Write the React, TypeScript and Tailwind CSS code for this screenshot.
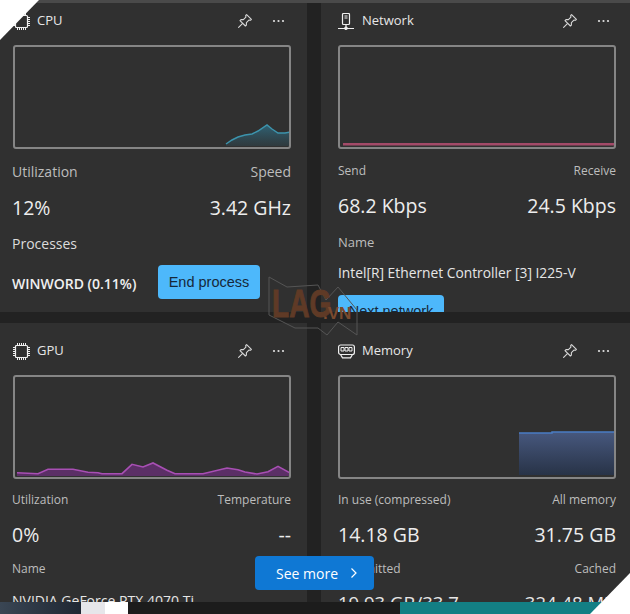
import React from "react";

const font = "font-['Open_Sans','Noto_Sans',sans-serif]";

const PinIcon = () => (
  <svg width="16" height="16" viewBox="0 0 16 16" fill="none" stroke="#d8d8d8" strokeWidth="1.1" strokeLinejoin="round" strokeLinecap="round">
    <path d="M9.6 1.6 14.4 6.4 13.5 7.3 11.9 7.1 9.4 9.6 9.4 12 8.4 13 3 7.6 4 6.6 6.4 6.6 8.9 4.1 8.7 2.5Z" />
    <path d="M5.4 10.6 1.6 14.4" />
  </svg>
);

const DotsIcon = () => (
  <svg width="13" height="4" viewBox="0 0 13 4" fill="#e0e0e0">
    <circle cx="2" cy="2" r="1.1" />
    <circle cx="6.5" cy="2" r="1.1" />
    <circle cx="11" cy="2" r="1.1" />
  </svg>
);

const ChipIcon = () => (
  <svg width="17" height="17" viewBox="0 0 17 17" fill="none" stroke="#f0f0f0">
    <rect x="2.5" y="2.5" width="12" height="12" rx="1" strokeWidth="1.2" />
    <path d="M4.5 0V2.5M6.5 0V2.5M8.5 0V2.5M10.5 0V2.5M12.5 0V2.5M4.5 14.5V17M6.5 14.5V17M8.5 14.5V17M10.5 14.5V17M12.5 14.5V17M0 4.5H2.5M0 6.5H2.5M0 8.5H2.5M0 10.5H2.5M0 12.5H2.5M14.5 4.5H17M14.5 6.5H17M14.5 8.5H17M14.5 10.5H17M14.5 12.5H17" />
  </svg>
);

const NetworkIcon = () => (
  <svg width="16" height="17" viewBox="0 0 16 17" fill="none" stroke="#f0f0f0" strokeWidth="1.2">
    <rect x="4.5" y="0.5" width="7" height="11" rx="1" />
    <path d="M6.5 3H9.5M6.5 5H9.5M8 11.5V15M0 15.5H16" />
    <circle cx="8" cy="15.2" r="1.2" fill="#f0f0f0" />
  </svg>
);

const MemoryIcon = () => (
  <svg width="17" height="15" viewBox="0 0 17 15" fill="none" stroke="#f0f0f0" strokeWidth="1.2">
    <rect x="0.6" y="1" width="15.8" height="9.5" rx="2" />
    <path d="M3 3.5H6V7H3ZM7 3.5H10V7H7ZM11 3.5H14V7H11Z" strokeWidth="1" />
    <path d="M2.5 10.5 4.5 13.8H12.5L14.5 10.5" />
  </svg>
);

const Header = ({ icon, title, iconWidth }: { icon: React.ReactNode; title: string; iconWidth: string }) => (
  <div className="flex h-[36px] items-center">
    <div className={`flex items-center ${iconWidth}`}>{icon}</div>
    <span className="text-[13px] text-[#e6e6e6]">{title}</span>
    <div className="ml-auto flex items-center pr-[5px]">
      <PinIcon />
      <div className="ml-[19px] flex w-[14px]">
        <DotsIcon />
      </div>
    </div>
  </div>
);

const Chart = ({ box, inset, children }: { box: string; inset?: string; children: React.ReactNode }) => (
  <div className={`mt-[6px] h-[104px] rounded-[3px] border-2 border-[#858585] ${inset ?? ""}`}>
    <svg className="block h-full w-full" viewBox={box} preserveAspectRatio="none">
      {children}
    </svg>
  </div>
);

const Row = ({ a, b, className }: { a: string; b: string; className: string }) => (
  <div className={`flex justify-between whitespace-nowrap ${className}`}>
    <span>{a}</span>
    <span>{b}</span>
  </div>
);

const cpuLine = "226,144 232,140 238,137 245,135 252,134 258,131 267,125 272,129 278,133 285,133 291,132";
const gpuLine =
  "17,472.7 38,473.7 48,469.3 73,469.3 88,472.3 98,472.7 102,473.7 122,473.7 132,464.3 143,467 153,463 167,470.3 175,473.7 203,473.7 227,468 238,469.7 245,472 257,474 268,471.7 278,466.3 290,473";

export default function App() {
  return (
    <div className={`relative flex h-[614px] w-[630px] flex-col overflow-hidden bg-[#222222] ${font}`}>
      <div className="h-[3px] bg-[#4a4a4a]" />

      <div className="grid h-[309px] grid-cols-[307px_309px] gap-x-[14px]">
        {/* CPU */}
        <section className="overflow-hidden bg-[#303030] pl-[12px] pr-[16px]">
          <Header icon={<ChipIcon />} title="CPU" iconWidth="w-[25px] pl-[1px]" />
          <Chart box="15 47 274 100" inset="ml-[1px]">
            <defs>
              <linearGradient id="cpuFill" x1="0" y1="0" x2="0" y2="1">
                <stop offset="0" stopColor="#2f6f86" stopOpacity="0.8" />
                <stop offset="1" stopColor="#2f5a6a" stopOpacity="0.25" />
              </linearGradient>
            </defs>
            <polygon points={`226,146 ${cpuLine} 291,146`} fill="url(#cpuFill)" />
            <polyline points={cpuLine} fill="none" stroke="#3c93ac" strokeWidth="1.5" />
          </Chart>
          <Row a="Utilization" b="Speed" className="mt-[13px] text-[14px] leading-[20px] text-[#bdbdbd]" />
          <Row a="12%" b="3.42 GHz" className="mt-[12px] text-[19.5px] leading-[28px] text-[#ededed]" />
          <div className="mt-[12px] text-[14px] leading-[20px] text-[#dcdcdc]">Processes</div>
          <div className="mt-[11px] flex items-center">
            <span className="w-[146px] whitespace-nowrap pt-[3px] text-[14px] font-semibold text-[#f0f0f0]">WINWORD (0.11%)</span>
            <button className="h-[34px] w-[102px] rounded-[4px] bg-[#4db8fb] pt-[1px] font-['Liberation_Sans',sans-serif] text-[14.5px] text-[#16283a]">
              End process
            </button>
          </div>
        </section>

        {/* Network */}
        <section className="overflow-hidden bg-[#303030] pl-[17px] pr-[14px]">
          <Header icon={<NetworkIcon />} title="Network" iconWidth="w-[24px]" />
          <Chart box="340 47 274 100">
            <rect x="343" y="143" width="272" height="2.5" fill="#a34a68" />
          </Chart>
          <Row a="Send" b="Receive" className="mt-[13px] text-[12px] leading-[18px] text-[#bdbdbd]" />
          <Row a="68.2 Kbps" b="24.5 Kbps" className="mt-[12px] text-[19.5px] leading-[28px] text-[#ededed]" />
          <div className="mt-[12px] text-[13px] leading-[20px] text-[#bdbdbd]">Name</div>
          <div className="mt-[11px] whitespace-nowrap text-[13.8px] leading-[20px] text-[#e6e6e6]">Intel[R] Ethernet Controller [3] I225-V</div>
          <button className="mt-[12px] h-[34px] w-[106px] rounded-[4px] bg-[#4db8fb] font-['Liberation_Sans',sans-serif] text-[14.5px] text-[#16283a]">
            Next network
          </button>
        </section>
      </div>

      <div className="mt-[11px] grid h-[279px] grid-cols-[307px_309px] gap-x-[14px]">
        {/* GPU */}
        <section className="overflow-hidden bg-[#303030] pl-[12px] pr-[16px]">
          <div className="mt-[10px]">
            <Header icon={<ChipIcon />} title="GPU" iconWidth="w-[25px] pl-[1px]" />
          </div>
          <Chart box="15 377 274 100" inset="ml-[1px]">
            <polygon points={`17,476 ${gpuLine} 290,476`} fill="#5b2f66" />
            <polyline points={gpuLine} fill="none" stroke="#a84fb4" strokeWidth="1.6" />
          </Chart>
          <Row a="Utilization" b="Temperature" className="mt-[12px] text-[12px] leading-[18px] text-[#bdbdbd]" />
          <Row a="0%" b="--" className="mt-[12px] text-[19.5px] leading-[28px] text-[#ededed]" />
          <div className="mt-[11px] text-[12px] leading-[18px] text-[#bdbdbd]">Name</div>
          <div className="mt-[13px] whitespace-nowrap text-[14px] leading-[20px] text-[#e6e6e6]">NVIDIA GeForce RTX 4070 Ti</div>
        </section>

        {/* Memory */}
        <section className="overflow-hidden bg-[#303030] pl-[17px] pr-[14px]">
          <div className="mt-[10px]">
            <Header icon={<MemoryIcon />} title="Memory" iconWidth="w-[24px]" />
          </div>
          <Chart box="340 377 274 100">
            <defs>
              <linearGradient id="memFill" x1="0" y1="0" x2="0" y2="1">
                <stop offset="0" stopColor="#47587e" />
                <stop offset="1" stopColor="#283347" />
              </linearGradient>
            </defs>
            <polygon points="519,433 552,433 552,432 616,432 616,475 519,475" fill="url(#memFill)" />
            <polyline points="519,433 552,433 552,432 616,432" fill="none" stroke="#4a7cc4" strokeWidth="1.5" />
          </Chart>
          <Row a="In use (compressed)" b="All memory" className="mt-[12px] text-[12px] leading-[18px] text-[#bdbdbd]" />
          <Row a="14.18 GB" b="31.75 GB" className="mt-[12px] text-[19.5px] leading-[28px] text-[#ededed]" />
          <Row a="Committed" b="Cached" className="mt-[11px] text-[12px] leading-[18px] text-[#bdbdbd]" />
          <Row a="19.93 GB/33.7" b="324.48 MB" className="mt-[11px] text-[18.5px] leading-[28px] text-[#e6e6e6]" />
        </section>
      </div>

      {/* taskbar strip under the panel */}
      <div className="flex h-[12px] bg-[#1c1c1c]">
        <div className="w-[81px] bg-gradient-to-r from-[#3a4654] to-[#1f2733]" />
        <div className="w-[24px] bg-[#e6e6ea]" />
        <div className="w-[23px] bg-white" />
        <div className="w-[272px]" />
        <div className="w-[230px] bg-[#137f84]" />
      </div>

      {/* overlays */}
      <button className="absolute left-[255px] top-[556px] flex h-[34px] w-[119px] items-center rounded-[4px] bg-[#0f78d4] pl-[21px] text-[14px] text-white">
        See more
        <svg className="ml-[12px]" width="8" height="12" viewBox="0 0 8 12" fill="none" stroke="white" strokeWidth="1.2">
          <path d="M1.5 1.5 6 6 1.5 10.5" />
        </svg>
      </button>

      <div className="absolute left-[268px] top-[276px] h-[60px] w-[92px]">
        <svg className="absolute inset-0" width="92" height="60" viewBox="0 0 92 60" fill="none" stroke="#555555" strokeWidth="1">
          <path d="M1 1 19 11 50 9 58 24 70 11 89 34 89 59 70 46 59 59 50 52 27 52 1 39Z" />
        </svg>
        <span className="absolute left-[4px] top-[8px] origin-left scale-x-[0.74] font-['Liberation_Sans',sans-serif] text-[38px] font-bold leading-[40px] text-[#5f3a26] [-webkit-text-stroke:1px_#5f3a26]">
          LAG
        </span>
        <span className="absolute left-[55px] top-[28px] font-['Liberation_Sans',sans-serif] text-[17px] font-bold leading-[20px] text-[#7a4a2e]">
          .VN
        </span>
      </div>

      <div className="absolute left-0 top-0 h-[40px] w-[39px] bg-white [clip-path:polygon(0_0,100%_0,0_100%)]" />
      <div className="absolute bottom-0 right-0 h-[41px] w-[40px] bg-white [clip-path:polygon(100%_0,100%_100%,0_100%)]" />
    </div>
  );
}
